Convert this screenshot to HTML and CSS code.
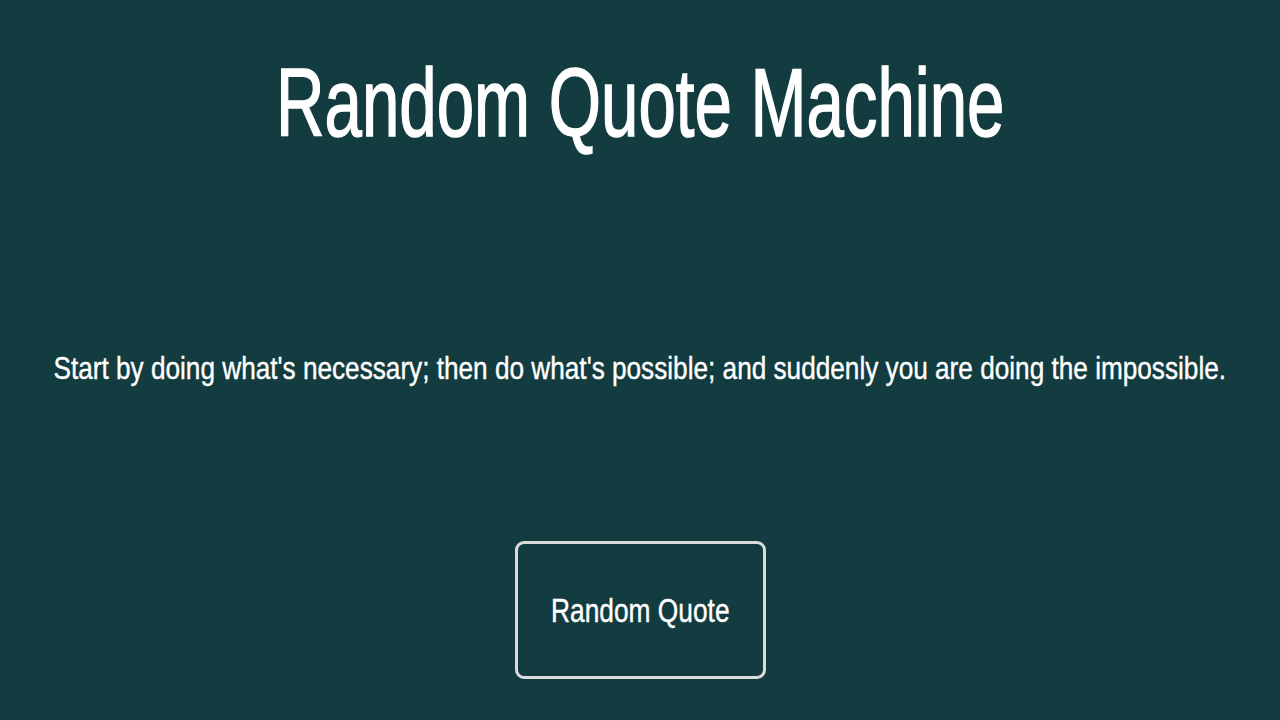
FILE: index.html
```html
<!DOCTYPE html>
<html lang="en">
<head>
<meta charset="utf-8">
<title>Random Quote Machine</title>
<link rel="stylesheet" href="styles.css">
</head>
<body>
<main class="app">
  <h1 class="title"><span class="squeeze">Random Quote Machine</span></h1>
  <p class="quote"><span class="squeeze">Start by doing what's necessary; then do what's possible; and suddenly you are doing the impossible.</span></p>
  <div class="actions">
    <button class="quote-btn" type="button"><span class="squeeze">Random Quote</span></button>
  </div>
</main>
</body>
</html>
```

FILE: styles.css
```css
html, body {
  margin: 0;
  padding: 0;
  background: #133c40;
}

.app {
  width: 1280px;
  height: 720px;
  display: flex;
  flex-direction: column;
  align-items: stretch;
  padding-top: 48px;
  box-sizing: border-box;
  overflow: hidden;
  font-family: "Liberation Sans", Arial, sans-serif;
  color: #ffffff;
}

.squeeze {
  display: inline-block;
  white-space: nowrap;
  transform-origin: center;
}

.title {
  margin: 0;
  display: flex;
  justify-content: center;
  font-size: 96px;
  font-weight: normal;
  line-height: 110px;
}

.title .squeeze {
  transform: scaleX(0.7);
  -webkit-text-stroke: 1.5px #ffffff;
}

.quote {
  margin: 192px 0 0;
  display: flex;
  justify-content: center;
  font-size: 32px;
  line-height: 37px;
}

.quote .squeeze {
  transform: scaleX(0.818);
  -webkit-text-stroke: 0.4px #ffffff;
}

.actions {
  margin-top: 154px;
  display: flex;
  justify-content: center;
}

.quote-btn {
  width: 251px;
  height: 138px;
  box-sizing: border-box;
  border: 3px solid #dcdcdc;
  border-radius: 9px;
  background: transparent;
  color: #ffffff;
  font-family: "Liberation Sans", Arial, sans-serif;
  font-size: 34px;
  padding: 0;
  display: flex;
  align-items: center;
  justify-content: center;
}

.quote-btn .squeeze {
  transform: scaleX(0.774);
  -webkit-text-stroke: 0.4px #ffffff;
}
```
